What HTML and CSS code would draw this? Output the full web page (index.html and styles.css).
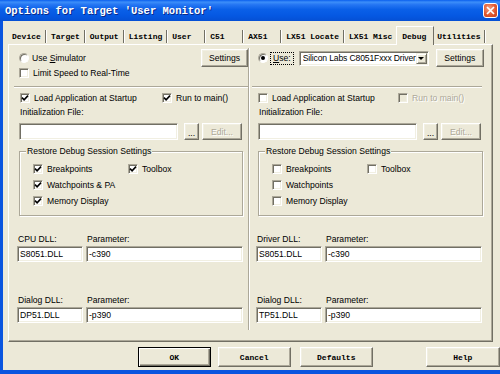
FILE: index.html
```html
<!DOCTYPE html>
<html>
<head>
<meta charset="utf-8">
<title>Options for Target</title>
<link rel="stylesheet" href="styles.css">
</head>
<body>
<div class="window">
  <div class="titlebar">
    <span class="title">Options for Target 'User Monitor'</span>
    <span class="close"><svg width="9" height="9" viewBox="0 0 9 9"><path d="M1 1L8 8M8 1L1 8" stroke="#fff" stroke-width="1.7" fill="none"/></svg></span>
  </div>
  <div class="frame">
    <div class="tabs">
      <span class="tab tab-first">Device</span>
      <span class="tab">Target</span>
      <span class="tab">Output</span>
      <span class="tab">Listing</span>
      <span class="tab">User</span>
      <span class="tab">C51</span>
      <span class="tab">AX51</span>
      <span class="tab">LX51 Locate</span>
      <span class="tab tab-nosep">LX51 Misc</span>
      <span class="tab tab-active">Debug</span>
      <span class="tab tab-last">Utilities</span>
    </div>
    <div class="panel">
      <div class="col col-left">
        <div class="row row-top">
          <span class="radio"></span><span class="lbl">Use <u>S</u>imulator</span>
          <span class="btn btn-settings">Settings</span>
        </div>
        <div class="row row-limit">
          <span class="cb"></span><span class="lbl">Limit Speed to Real-Time</span>
        </div>
        <div class="sep"></div>
        <div class="row row-load">
          <span class="opt opt-load"><span class="cb"><svg class="tick" width="8" height="8" viewBox="0 0 8 8"><path d="M1 3.6L3.1 5.8L7 1.6" stroke="#000" stroke-width="1.6" fill="none"/></svg></span>Load Application at Startup</span>
          <span class="opt"><span class="cb"><svg class="tick" width="8" height="8" viewBox="0 0 8 8"><path d="M1 3.6L3.1 5.8L7 1.6" stroke="#000" stroke-width="1.6" fill="none"/></svg></span>Run to main()</span>
        </div>
        <div class="row row-init">Initialization File:</div>
        <div class="row row-edit">
          <span class="edit edit-init"></span>
          <span class="btn btn-dots">...</span>
          <span class="btn btn-edit disabled">Edit...</span>
        </div>
        <div class="group">
          <div class="group-title">Restore Debug Session Settings</div>
          <div class="group-grid">
            <span class="opt"><span class="cb"><svg class="tick" width="8" height="8" viewBox="0 0 8 8"><path d="M1 3.6L3.1 5.8L7 1.6" stroke="#000" stroke-width="1.6" fill="none"/></svg></span>Breakpoints</span>
            <span class="opt"><span class="cb"><svg class="tick" width="8" height="8" viewBox="0 0 8 8"><path d="M1 3.6L3.1 5.8L7 1.6" stroke="#000" stroke-width="1.6" fill="none"/></svg></span>Toolbox</span>
            <span class="opt"><span class="cb"><svg class="tick" width="8" height="8" viewBox="0 0 8 8"><path d="M1 3.6L3.1 5.8L7 1.6" stroke="#000" stroke-width="1.6" fill="none"/></svg></span>Watchpoints &amp; PA</span>
            <span></span>
            <span class="opt"><span class="cb"><svg class="tick" width="8" height="8" viewBox="0 0 8 8"><path d="M1 3.6L3.1 5.8L7 1.6" stroke="#000" stroke-width="1.6" fill="none"/></svg></span>Memory Display</span>
          </div>
        </div>
        <div class="dll">
          <span class="dll-lbl">CPU DLL:</span>
          <span class="dll-lbl">Parameter:</span>
          <span class="edit">S8051.DLL</span>
          <span class="edit">-c390</span>
          <span class="dll-lbl dll-gap">Dialog DLL:</span>
          <span class="dll-lbl dll-gap">Parameter:</span>
          <span class="edit">DP51.DLL</span>
          <span class="edit">-p390</span>
        </div>
      </div>
      <div class="divider"></div>
      <div class="col col-right">
        <div class="row row-top">
          <span class="radio radio-on"><span class="dot"></span></span>
          <span class="focus"><u>U</u>se:</span>
          <span class="combo"><span class="combo-text">Silicon Labs C8051Fxxx Driver</span><span class="combo-arrow"><span class="tri"></span></span></span>
          <span class="btn btn-settings2">Settings</span>
        </div>
        <div class="row row-limit"></div>
        <div class="sep"></div>
        <div class="row row-load">
          <span class="opt opt-load2"><span class="cb"></span>Load Application at Startup</span>
          <span class="opt disabled"><span class="cb cb-dis"></span>Run to main()</span>
        </div>
        <div class="row row-init">Initialization File:</div>
        <div class="row row-edit">
          <span class="edit edit-init"></span>
          <span class="btn btn-dots">...</span>
          <span class="btn btn-edit disabled">Edit...</span>
        </div>
        <div class="group">
          <div class="group-title">Restore Debug Session Settings</div>
          <div class="group-grid">
            <span class="opt"><span class="cb"></span>Breakpoints</span>
            <span class="opt"><span class="cb"></span>Toolbox</span>
            <span class="opt"><span class="cb"></span>Watchpoints</span>
            <span></span>
            <span class="opt"><span class="cb"></span>Memory Display</span>
          </div>
        </div>
        <div class="dll">
          <span class="dll-lbl">Driver DLL:</span>
          <span class="dll-lbl">Parameter:</span>
          <span class="edit">S8051.DLL</span>
          <span class="edit">-c390</span>
          <span class="dll-lbl dll-gap">Dialog DLL:</span>
          <span class="dll-lbl dll-gap">Parameter:</span>
          <span class="edit">TP51.DLL</span>
          <span class="edit">-p390</span>
        </div>
      </div>
    </div>
    <div class="buttons">
      <span class="bbtn bbtn-ok">OK</span>
      <span class="bbtn bbtn-cancel">Cancel</span>
      <span class="bbtn bbtn-defaults">Defaults</span>
      <span class="bbtn bbtn-help">Help</span>
    </div>
  </div>
</div>
</body>
</html>
```

FILE: styles.css
```css
* { box-sizing: border-box; }
html, body { margin: 0; padding: 0; }
body {
  width: 500px;
  height: 374px;
  overflow: hidden;
  background: #ECE9D8;
  font-family: "Liberation Sans", Arial, sans-serif;
  font-size: 8.6px;
  color: #000;
}
u { text-decoration: underline; text-underline-offset: 1px; }

.window {
  width: 500px;
  height: 374px;
  display: flex;
  flex-direction: column;
}

/* title bar */
.titlebar {
  height: 21px;
  flex: none;
  display: flex;
  align-items: center;
  padding-left: 5px;
  background: linear-gradient(180deg, #0A5FEE 0%, #3C8EF9 10%, #2576F3 22%, #0A60E8 45%, #0558E2 75%, #0550D4 100%);
}
.title {
  font-family: "Liberation Mono", monospace;
  font-weight: bold;
  font-size: 10.5px;
  color: #fff;
  text-shadow: 1px 1px 0 #0A2A8A;
  white-space: pre;
}
.close {
  margin-left: auto;
  margin-right: 2px;
  width: 15px;
  height: 15px;
  border: 1px solid #fff;
  border-radius: 3px;
  background: radial-gradient(circle at 40% 35%, #F4A286 0%, #E2582F 55%, #C23E1C 100%);
  display: flex;
  align-items: center;
  justify-content: center;
}

/* window frame */
.frame {
  flex: 1;
  display: flex;
  flex-direction: column;
  border-left: 3px solid #0A55DF;
  border-bottom: 4px solid #0A55DF;
  padding: 6px 0 0 5px;
}

/* tabs */
.tabs {
  height: 17px;
  flex: none;
  display: flex;
  align-items: flex-end;
  padding-bottom: 1px;
}
.tab {
  font-family: "Liberation Mono", monospace;
  font-weight: bold;
  font-size: 8px;
  height: 13px;
  line-height: 13px;
  min-width: 38px;
  padding: 0 4px 0 5px;
  border-right: 1px solid #716F64;
  box-shadow: 1px 0 0 #fff;
  white-space: pre;
}
.tab-first { padding-left: 4px; }
.tab-nosep { border-right: none; box-shadow: none; }
.tab-last { padding-left: 3px; }
.tab-active {
  position: relative;
  z-index: 1;
  height: 19px;
  margin-bottom: -2px;
  padding-top: 3px;
  background: #ECE9D8;
  border-top: 1px solid #fff;
  border-left: 1px solid #fff;
  border-right: 1px solid #716F64;
  box-shadow: none;
}

/* panel */
.panel {
  flex: none;
  width: 485px;
  height: 298px;
  display: flex;
  align-items: flex-start;
  padding: 4px 0 0 5px;
  border-top: 1px solid #fff;
  border-left: 1px solid #fff;
  border-right: 1px solid #716F64;
  border-bottom: 1px solid #716F64;
  box-shadow: inset -1px -1px 0 #ACA899;
}
.col { display: flex; flex-direction: column; }
.col-left { width: 234px; padding: 0 5px; }
.col-right { width: 241px; padding: 0 9px 0 8px; }
.divider {
  width: 2px;
  height: 282px;
  margin-top: -1px;
  border-left: 1px solid #ACA899;
  border-right: 1px solid #fff;
}

.row { display: flex; align-items: center; white-space: nowrap; }
.row-top { height: 18px; }
.row-limit { height: 11px; }
.row-load { height: 14px; margin-top: 3px; }
.row-init { height: 14px; padding-left: 1px; }
.row-edit { height: 17px; margin-top: 4px; }

.sep {
  height: 2px;
  margin-top: 8px;
  border-top: 1px solid #ACA899;
  border-bottom: 1px solid #fff;
}
.col-left .sep { margin-left: -5px; margin-right: -5px; }
.col-right .sep { margin-left: -6px; }

.lbl { white-space: nowrap; }

/* radio */
.radio {
  flex: none;
  width: 10px;
  height: 10px;
  margin-right: 3px;
  border-radius: 50%;
  background: #fff;
  border: 1px solid;
  border-color: #ACA899 #fff #fff #ACA899;
  box-shadow: inset 1px 1px 0 #716F64;
  display: flex;
  align-items: center;
  justify-content: center;
}
.radio-on { margin-right: 2px; }
.dot {
  width: 4px;
  height: 4px;
  border-radius: 50%;
  background: #000;
}

/* checkbox */
.cb {
  flex: none;
  width: 10px;
  height: 10px;
  margin-right: 4px;
  background: #fff;
  border: 1px solid;
  border-color: #ACA899 #fff #fff #ACA899;
  box-shadow: inset 1px 1px 0 #716F64, inset -1px -1px 0 #F1EFE2;
  display: flex;
  align-items: center;
  justify-content: center;
}
.cb-dis { background: #ECE9D8; }
.tick { display: block; }
.opt { display: flex; align-items: center; white-space: nowrap; }
.opt-load { width: 143px; padding-left: 1px; }
.opt-load2 { width: 140px; }

/* buttons */
.btn {
  flex: none;
  display: flex;
  align-items: center;
  justify-content: center;
  background: #ECE9D8;
  border: 1px solid;
  border-color: #fff #716F64 #716F64 #fff;
  box-shadow: inset -1px -1px 0 #ACA899, inset 1px 1px 0 #F1EFE2;
  white-space: nowrap;
}
.btn-settings { margin-left: auto; margin-right: -5px; width: 47px; height: 18px; }
.btn-settings2 { margin-left: 7px; width: 48px; height: 18px; }
.btn-dots { width: 15px; height: 17px; margin-right: 3px; padding-top: 2px; }
.btn-edit { width: 40px; height: 17px; }
.disabled { color: #ACA899; text-shadow: 1px 1px 0 #fff; }

/* edits */
.edit {
  display: block;
  background: #fff;
  height: 16px;
  line-height: 14px;
  padding-left: 2px;
  border: 1px solid;
  border-color: #ACA899 #fff #fff #ACA899;
  box-shadow: inset 1px 1px 0 #716F64, inset -1px -1px 0 #F1EFE2;
  white-space: nowrap;
  overflow: hidden;
}
.edit-init { width: 159px; height: 17px; margin-right: 6px; }

/* focus + combo */
.focus {
  border: 1px dotted #000;
  padding: 0 2px;
  line-height: 11px;
  height: 13px;
  margin-right: 5px;
}
.combo {
  width: 133px;
  height: 15px;
  display: flex;
  align-items: center;
  padding-left: 3px;
  background: #fff;
  border: 1px solid;
  border-color: #ACA899 #fff #fff #ACA899;
  box-shadow: inset 1px 1px 0 #716F64, inset -1px -1px 0 #F1EFE2;
}
.combo-text {
  flex: 1;
  overflow: hidden;
  white-space: nowrap;
  letter-spacing: -0.15px;
}
.combo-arrow {
  flex: none;
  width: 11px;
  height: 11px;
  margin-right: 1px;
  background: #ECE9D8;
  border: 1px solid;
  border-color: #F1EFE2 #716F64 #716F64 #F1EFE2;
  box-shadow: inset 1px 1px 0 #fff, inset -1px -1px 0 #ACA899;
  display: flex;
  align-items: center;
  justify-content: center;
}
.tri {
  width: 0;
  height: 0;
  border-left: 3px solid transparent;
  border-right: 3px solid transparent;
  border-top: 3px solid #000;
}

/* group */
.group {
  margin-top: 11px;
  height: 65px;
  border: 1px solid #ACA899;
  box-shadow: inset 1px 1px 0 #fff, 1px 1px 0 #fff;
}
.col-right .group { margin-right: -1px; }
.group-title {
  display: table;
  margin: -6px 0 0 6px;
  padding: 0 1px;
  line-height: 11px;
  background: #ECE9D8;
  white-space: nowrap;
}
.group-grid {
  display: grid;
  grid-template-columns: 95px auto;
  grid-auto-rows: 16px;
  margin: 4px 0 0 13px;
}

/* dll */
.dll {
  display: grid;
  grid-template-columns: 66px 157px;
  column-gap: 3px;
  margin: 16px 0 0 -2px;
}
.dll-lbl { line-height: 14px; height: 14px; padding-left: 1px; white-space: nowrap; }
.dll-gap { margin-top: 31px; }

/* bottom buttons */
.buttons {
  flex: none;
  display: flex;
  height: 20px;
  margin-top: 5px;
  padding-left: 130px;
}
.bbtn {
  display: flex;
  align-items: center;
  justify-content: center;
  font-family: "Liberation Mono", monospace;
  font-weight: bold;
  font-size: 8px;
  height: 20px;
  background: #ECE9D8;
  border: 1px solid;
  border-color: #fff #716F64 #716F64 #fff;
  box-shadow: inset -1px -1px 0 #ACA899, inset 1px 1px 0 #F1EFE2;
}
.bbtn-ok {
  width: 73px;
  border: 1px solid #000;
  box-shadow: inset 1px 1px 0 #fff, inset -1px -1px 0 #716F64, inset -2px -2px 0 #ACA899;
}
.bbtn-cancel { width: 74px; margin-left: 7px; }
.bbtn-defaults { width: 73px; margin-left: 9px; }
.bbtn-help { width: 75px; margin-left: 53px; }
```
